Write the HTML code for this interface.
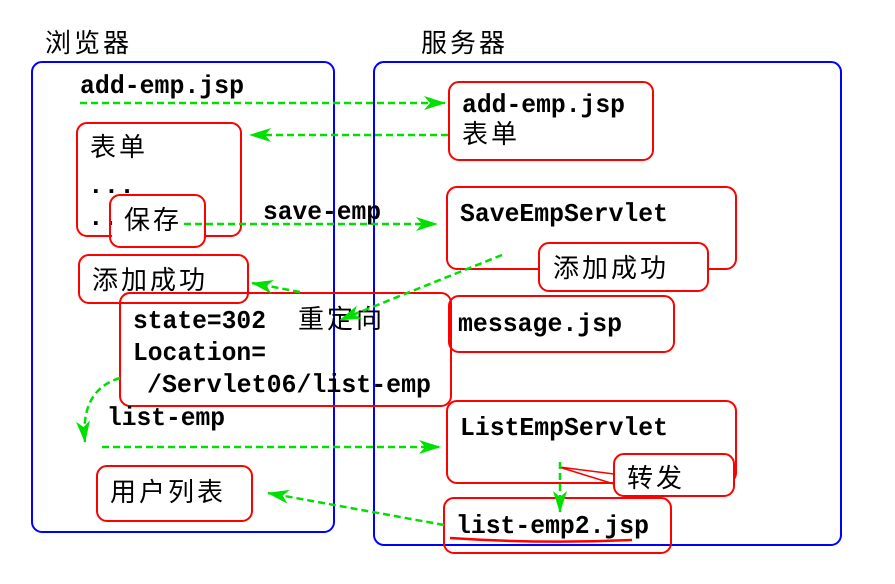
<!DOCTYPE html>
<html><head><meta charset="utf-8"><style>
html,body{margin:0;padding:0;background:#fff;width:895px;height:584px;overflow:hidden}
svg{display:block}
.m{font-family:"Liberation Mono",monospace;font-weight:bold;font-size:26px;fill:#000}
.c{font-family:"Liberation Sans","Noto Sans CJK SC",sans-serif;font-size:26px;fill:#000;letter-spacing:3px}
</style></head><body>
<svg width="895" height="584" viewBox="0 0 895 584" xmlns="http://www.w3.org/2000/svg">
<defs>
<marker id="a" markerWidth="22" markerHeight="14" refX="21" refY="7" orient="auto" markerUnits="userSpaceOnUse">
<path d="M0,0 L22,7 L0,14 L6,7 Z" fill="#00e000"/></marker>
</defs>
<g fill="none" stroke="#0000ff" stroke-width="2">
<rect x="32" y="62" width="302" height="470" rx="10"/>
<rect x="374" y="62" width="467" height="483" rx="10"/>
</g>
<text class="c" x="45" y="52" font-size="28">浏览器</text>
<text class="c" x="421" y="52" font-size="28">服务器</text>
<g fill="none" stroke="#ff0000" stroke-width="2">
<rect x="449" y="82" width="204" height="78" rx="10"/>
<rect x="77" y="123" width="164" height="113" rx="10"/>
<rect x="447" y="187" width="289" height="82" rx="10"/>
<rect x="539" y="243" width="169" height="48" rx="10" fill="#fff"/>
<rect x="79" y="255" width="169" height="48" rx="10"/>
<rect x="120" y="293" width="331" height="113" rx="10"/>
<rect x="449" y="296" width="225" height="56" rx="10"/>
<rect x="447" y="401" width="289" height="82" rx="10"/>
<rect x="614" y="454" width="120" height="42" rx="10" fill="#fff"/>
<rect x="97" y="466" width="155" height="55" rx="10"/>
<rect x="444" y="498" width="227" height="55" rx="10"/>
<path d="M614,474 L559,467 L614,484" stroke-width="1.5"/>
<path d="M450,538 Q540,544 632,540" stroke-width="2.5"/>
</g>
<g class="m">
<text x="80" y="93" textLength="164" lengthAdjust="spacingAndGlyphs">add-emp.jsp</text>
<text x="462" y="112" textLength="163" lengthAdjust="spacingAndGlyphs">add-emp.jsp</text>
<text x="88" y="193">...</text>
<text x="88" y="225">..</text>
<text x="263" y="219" textLength="118" lengthAdjust="spacingAndGlyphs">save-emp</text>
<text x="460" y="221" textLength="208" lengthAdjust="spacingAndGlyphs">SaveEmpServlet</text>
<text x="458" y="331" textLength="164" lengthAdjust="spacingAndGlyphs">message.jsp</text>
<text x="133" y="328" textLength="133" lengthAdjust="spacingAndGlyphs">state=302</text>
<text x="133" y="360" textLength="133" lengthAdjust="spacingAndGlyphs">Location=</text>
<text x="147" y="392" textLength="284" lengthAdjust="spacingAndGlyphs">/Servlet06/list-emp</text>
<text x="107" y="425" textLength="118" lengthAdjust="spacingAndGlyphs">list-emp</text>
<text x="460" y="435" textLength="208" lengthAdjust="spacingAndGlyphs">ListEmpServlet</text>
<text x="456" y="533" textLength="193" lengthAdjust="spacingAndGlyphs">list-emp2.jsp</text>
</g>
<rect x="112" y="197" width="92" height="48" rx="9" fill="#fff"/>
<rect x="110" y="195" width="95" height="52" rx="10" fill="none" stroke="#ff0000" stroke-width="2"/>
<g class="c">
<text x="462" y="143">表单</text>
<text x="90" y="156">表单</text>
<text x="124" y="229">保存</text>
<text x="553" y="277">添加成功</text>
<text x="92" y="289">添加成功</text>
<text x="298" y="328">重定向</text>
<text x="627" y="487">转发</text>
<text x="110" y="501">用户列表</text>
</g>
<g fill="none" stroke="#00e000" stroke-width="2.5" stroke-dasharray="7,4">
<path d="M80,103 L445,103" marker-end="url(#a)"/>
<path d="M448,135 L250,135" marker-end="url(#a)"/>
<path d="M184,224 L437,224" marker-end="url(#a)"/>
<path d="M502,255 L340,320" marker-end="url(#a)"/>
<path d="M300,292 L252,283" marker-end="url(#a)"/>
<path d="M120,378 Q80,390 85,442" marker-end="url(#a)"/>
<path d="M102,447 L440,447" marker-end="url(#a)"/>
<path d="M560,462 L560,512" marker-end="url(#a)"/>
<path d="M444,525 L268,493" marker-end="url(#a)"/>
</g>
</svg>
</body></html>
